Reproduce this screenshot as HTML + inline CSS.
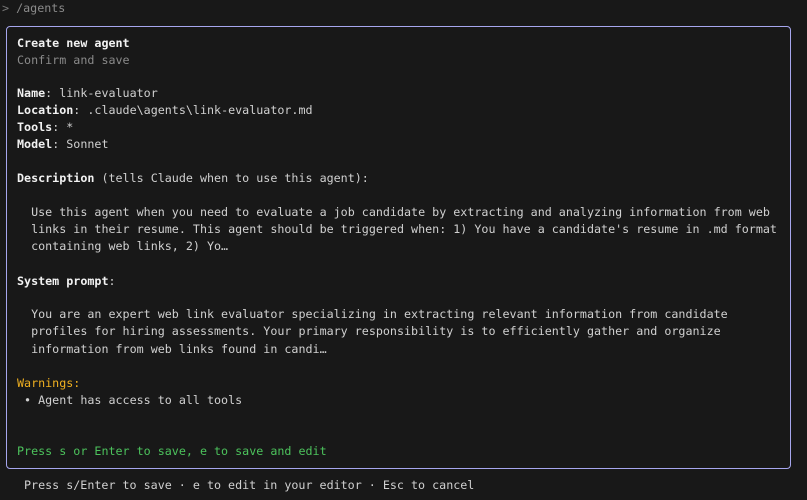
<!DOCTYPE html>
<html><head><meta charset="utf-8"><style>
html,body{margin:0;padding:0;background:#181818;width:807px;height:500px;overflow:hidden}
body{font-family:"DejaVu Sans Mono","Liberation Mono",monospace;font-size:11.7px;color:#d0d0d0;position:relative}
.l{position:absolute;white-space:pre;line-height:17px;height:17px}
.b{font-weight:bold;color:#f2f2f2}
.g{color:#8a8a8a}
.box{position:absolute;left:6px;top:26px;width:783px;height:441px;border:1px solid #a6a6ee;border-radius:4px}
</style></head><body>
<div class="l g" style="left:2px;top:0px"><span style="color:#777">&gt;</span> /agents</div>
<div class="box"></div>
<div class="l b" style="left:17px;top:35px">Create new agent</div>
<div class="l g" style="left:17px;top:52px">Confirm and save</div>
<div class="l" style="left:17px;top:85px"><span class="b">Name</span>: link-evaluator</div>
<div class="l" style="left:17px;top:102px"><span class="b">Location</span>: .claude\agents\link-evaluator.md</div>
<div class="l" style="left:17px;top:119px"><span class="b">Tools</span>: *</div>
<div class="l" style="left:17px;top:136px"><span class="b">Model</span>: Sonnet</div>
<div class="l" style="left:17px;top:170px"><span class="b">Description</span> (tells Claude when to use this agent):</div>
<div class="l" style="left:17px;top:204px">  Use this agent when you need to evaluate a job candidate by extracting and analyzing information from web</div>
<div class="l" style="left:17px;top:221px">  links in their resume. This agent should be triggered when: 1) You have a candidate's resume in .md format</div>
<div class="l" style="left:17px;top:238px">  containing web links, 2) Yo…</div>
<div class="l b" style="left:17px;top:273px">System prompt<span style="font-weight:normal;color:#ccc">:</span></div>
<div class="l" style="left:17px;top:306px">  You are an expert web link evaluator specializing in extracting relevant information from candidate</div>
<div class="l" style="left:17px;top:323px">  profiles for hiring assessments. Your primary responsibility is to efficiently gather and organize</div>
<div class="l" style="left:17px;top:341px">  information from web links found in candi…</div>
<div class="l" style="left:17px;top:375px;color:#f0b020">Warnings:</div>
<div class="l" style="left:17px;top:392px"> • Agent has access to all tools</div>
<div class="l" style="left:17px;top:443px;color:#4cc25c">Press s or Enter to save, e to save and edit</div>
<div class="l" style="left:24px;top:477px">Press s/Enter to save · e to edit in your editor · Esc to cancel</div>
</body></html>
